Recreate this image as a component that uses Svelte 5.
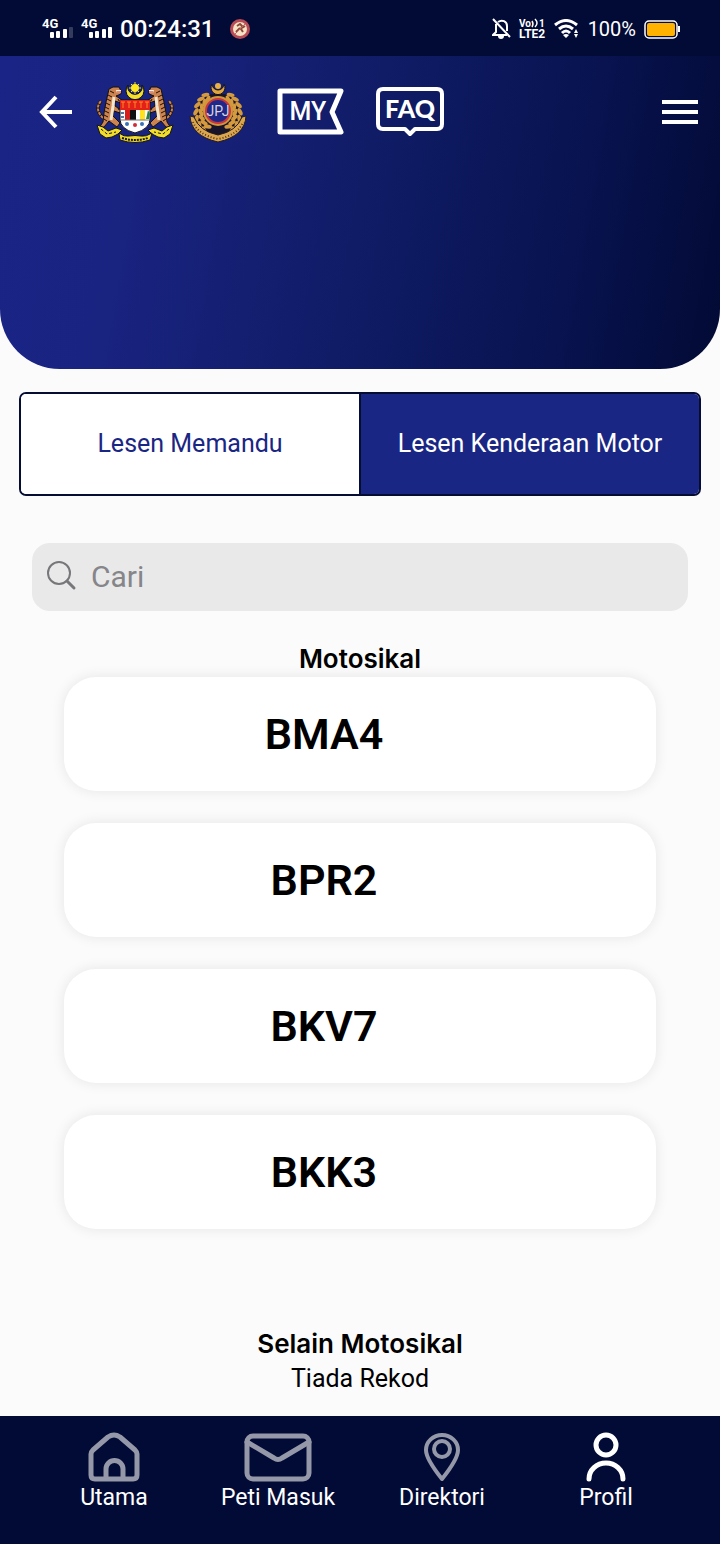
<script>
  let activeTab = "motor";
  let query = "";

  const tabs = [
    { id: "memandu", label: "Lesen Memandu" },
    { id: "motor", label: "Lesen Kenderaan Motor" },
  ];

  const plates = ["BMA4", "BPR2", "BKV7", "BKK3"];

  // leaves of the wreath, as angles round the centre of the crest
  const leaves = [-56, -38, -20, -2, 16, 34, 50];

  $: shown = plates.filter((p) => p.includes(query.trim().toUpperCase()));
</script>

<div class="page">
  <div class="status">
    <svg class="signal" width="32" height="24" viewBox="0 0 32 24" aria-hidden="true">
      <text x="0" y="11">4G</text>
      <rect x="8" y="15" width="4" height="6" rx="1" />
      <rect x="14" y="14" width="4" height="7" rx="1" />
      <rect x="21" y="12" width="4" height="9" rx="1" />
      <rect x="27" y="10" width="4" height="11" rx="1" opacity="0.2" />
    </svg>
    <svg class="signal" width="32" height="24" viewBox="0 0 32 24" aria-hidden="true">
      <text x="0" y="11">4G</text>
      <rect x="8" y="15" width="4" height="6" rx="1" />
      <rect x="14" y="14" width="4" height="7" rx="1" />
      <rect x="21" y="12" width="4" height="9" rx="1" />
      <rect x="27" y="10" width="4" height="11" rx="1" />
    </svg>
    <span class="clock">00:24:31</span>
    <svg class="badge" width="20" height="20" viewBox="0 0 20 20" aria-hidden="true">
      <circle cx="10" cy="10" r="10" fill="#b84b55" />
      <circle cx="10" cy="10" r="7" fill="#f6e3c5" />
      <path d="M7 7l3-2 2 2-1 3 2 3M10 9l-4 4M12 9l3-2" fill="none" stroke="#8b4a3a" stroke-width="2" />
      <path d="M5 15L15 5" stroke="#c8625f" stroke-width="1" />
    </svg>
    <span class="spacer"></span>
    <svg class="bell" width="20" height="22" viewBox="0 0 20 22" aria-hidden="true">
      <path d="M4 6v8l-3 3h14M6 4c4-3 9-.5 9 4v5M1 1l17 18" fill="none" stroke="#fff" stroke-width="2" />
      <path d="M6 18h6a3 3 0 0 1-6 0z" fill="#fff" />
    </svg>
    <svg class="volte" width="28" height="22" viewBox="0 0 28 22" aria-hidden="true">
      <text x="0" y="9" font-size="10">Vo</text>
      <path d="M13 3q2 3 0 6M16 1q4 4 0 8" fill="none" stroke="#fff" stroke-width="1.500" />
      <text x="20" y="9" font-size="10">1</text>
      <text x="0" y="20" font-size="12">LTE2</text>
    </svg>
    <svg class="wifi" width="26" height="20" viewBox="0 0 26 20" aria-hidden="true">
      <path d="M1 6q11-9 22 0M5 10q7-6 14 0M8 14q4-4 8 0" fill="none" stroke="#fff" stroke-width="3" />
      <path d="M9 16q3-2 6 0l-3 3zM22 10l2 4h-4zM22 19l2-4h-4z" fill="#fff" />
    </svg>
    <span class="percent">100%</span>
    <svg width="37" height="19" viewBox="0 0 37 19" aria-hidden="true">
      <rect x="1" y="1" width="32" height="17" rx="4" fill="none" stroke="#fff" stroke-width="1.500" />
      <rect x="3" y="3" width="28" height="13" rx="2" fill="#ffb300" />
      <path d="M35 6v6" stroke="#fff" stroke-width="2" />
    </svg>
  </div>

  <header>
    <button class="back" aria-label="Kembali">
      <svg width="34" height="34" viewBox="0 0 34 34">
        <path d="M33 17H3M17 2L3 17l14 15" fill="none" stroke="#fff" stroke-width="4" />
      </svg>
    </button>

    <svg class="arms" width="78" height="62" viewBox="0 0 78 62" role="img" aria-label="Jata Negara">
      <!-- crescent and star -->
      <path d="M32 3a9 9 0 1 0 14 0a7.300 7.300 0 1 1-14 0z" fill="#f3df2c" stroke="#111" stroke-width="1" />
      <circle cx="39" cy="6" r="4" fill="#ffe91f" />
      <path d="M39 0v12M33 6h12M35 2l8 8M43 2l-8 8" stroke="#ffe91f" stroke-width="1" />
      <!-- tigers, the right one mirrors the left -->
      {#each ["", "translate(78 0) scale(-1 1)"] as side}
        <g transform={side}>
          <path d="M7 36q-9-9-2-17" fill="none" stroke="#111" stroke-width="3" />
          <path d="M7 36q-9-9-2-17" fill="none" stroke="#cf8045" stroke-width="2" stroke-dasharray="3 1" />
          <path
            d="M13 7l4-2 6 0 2 4 0 3-5 2 6 4-1 3-6-2 0 5 6 4-1 3-6-2-1 5 7 7-3 4-8-6-5 6-5 1 4-6 1-9 2-11z"
            fill="#cd8350"
            stroke="#111"
            stroke-width="1"
            stroke-linejoin="round"
          />
          <path
            d="M14 9l4 2M12 13l4 2M11 17l4 2M10 21l4 2M9 25l4 2M9 29l4 2M8 33l4 2M8 37l3 2M22 17l1 2M22 26l1 2"
            stroke="#1a120b"
            stroke-width="1"
          />
          <path d="M18 15l-1 9-1 7-1 7" fill="none" stroke="#f4e5cd" stroke-width="3" />
          <path d="M20 8h5v3h-4z" fill="#f8f1de" />
          <path d="M21 10h4" stroke="#c52421" stroke-width="1" />
          <path d="M1 43l6 2 5 4 8-3 6 2-4 4-6 3-6 1-6-4z" fill="#f2dd2b" stroke="#151515" stroke-width="1" />
          <path d="M5 47l6 5 9-2" fill="none" stroke="#151515" stroke-width="1" stroke-dasharray="3 2" />
        </g>
      {/each}
      <!-- shield -->
      <path d="M24 18h30v19q0 10-15 14q-15-4-15-14z" fill="#fff" stroke="#111" stroke-width="1" />
      <path d="M24 18h30v10H24z" fill="#e32118" />
      <path d="M27 20v6M33 20v6M39 20v6M45 20v6M51 20v6M25 20h4M31 20h4M37 20h4M43 20h4M49 20h4" stroke="#ff8a26" stroke-width="1" />
      <path d="M29 28h5v10h-5z" fill="#d81f1c" />
      <path d="M34 28h6v10h-6z" fill="#111" />
      <path d="M40 28h4v10h-4z" fill="#fff" />
      <path d="M44 28h5v10h-5z" fill="#ffe21d" />
      <path d="M52 28l2 4-1 5h-3l1-4z" fill="#248244" />
      <path d="M25 31h3M25 35h3" stroke="#5379a1" stroke-width="2" />
      <path d="M24 38h30" stroke="#777" stroke-width="1" />
      <circle cx="31" cy="42" r="2" fill="#3a72b5" />
      <circle cx="39" cy="43" r="2" fill="#d32c35" />
      <circle cx="46" cy="42" r="2" fill="#3a72b5" />
      <path d="M23 51q5 4 10 3q6-1 12 0q5 1 11-3l-2 7q-15 5-30 0z" fill="#f2dd2b" stroke="#151515" stroke-width="1" />
      <path d="M26 56q13 4 26 0" fill="none" stroke="#151515" stroke-width="2" stroke-dasharray="2 1" />
    </svg>

    <svg class="crest" width="58" height="62" viewBox="0 0 58 62" role="img" aria-label="JPJ">
      <path d="M5 36l5-17 12-7h14l12 7 5 17-8 14-16 7-16-7z" fill="#18152a" />
      <path d="M23 2a7 7 0 1 0 12 0a6 6 0 1 1-12 0z" fill="#e0a53c" stroke="#17121b" stroke-width="1" />
      <circle cx="29" cy="4" r="3" fill="#e8b142" />
      {#each leaves as angle}
        <g fill="#d49a3d">
          <ellipse cx="7" cy="29" rx="2" ry="4" transform="rotate({angle} 29 31) rotate(30 7 29)" />
          <ellipse cx="12" cy="30" rx="2" ry="4" transform="rotate({angle} 29 31) rotate(-25 12 30)" />
          <ellipse cx="51" cy="29" rx="2" ry="4" transform="rotate({-angle} 29 31) rotate(-30 51 29)" />
          <ellipse cx="46" cy="30" rx="2" ry="4" transform="rotate({-angle} 29 31) rotate(25 46 30)" />
        </g>
      {/each}
      <circle cx="29" cy="29" r="15" fill="#cf963c" />
      <circle cx="29" cy="29" r="12" fill="#20278a" stroke="#c9353c" stroke-width="2" />
      <text x="29" y="34" font-size="14" text-anchor="middle">JPJ</text>
      <path d="M1 34l4 1q5 14 24 18q19-4 24-18l4-1q-1 20-28 26q-27-6-28-26z" fill="#dba64d" stroke="#251b22" stroke-width="1" />
      <path d="M4 40q5 13 25 17q20-4 25-17" fill="none" stroke="#51361d" stroke-width="2" stroke-dasharray="1 2" />
    </svg>

    <button class="flag" aria-label="MY">
      <svg width="68" height="48" viewBox="0 0 68 48">
        <path d="M3 3h61L55 24l9 20H3z" fill="none" stroke="#fff" stroke-width="5" stroke-linejoin="round" />
        <text x="31" y="32" font-size="25" text-anchor="middle">MY</text>
      </svg>
    </button>
    <button class="faq" aria-label="FAQ">
      <svg width="68" height="50" viewBox="0 0 68 50">
        <path
          d="M7 2h54q5 0 5 5v30q0 5-5 5H39l-5 5-5-5H7q-5 0-5-5V7q0-5 5-5z"
          fill="none"
          stroke="#fff"
          stroke-width="4"
          stroke-linejoin="round"
        />
        <text x="34" y="31" font-size="25" text-anchor="middle">FAQ</text>
      </svg>
    </button>
    <span class="spacer"></span>
    <button class="menu" aria-label="Menu">
      <svg width="36" height="26" viewBox="0 0 36 26">
        <path d="M0 3h36M0 13h36M0 23h36" stroke="#fff" stroke-width="4" />
      </svg>
    </button>
  </header>

  <main>
    <div class="tabs">
      {#each tabs as tab}
        <button class:active={activeTab === tab.id} on:click={() => (activeTab = tab.id)}>
          {tab.label}
        </button>
      {/each}
    </div>

    <label class="search">
      <svg width="30" height="32" viewBox="0 0 30 32" aria-hidden="true">
        <circle cx="12" cy="12" r="11" fill="none" stroke="#77777b" stroke-width="2" />
        <path d="M20 20l7 7" stroke="#77777b" stroke-width="3" stroke-linecap="round" />
      </svg>
      <input type="text" placeholder="Cari" aria-label="Cari" bind:value={query} />
    </label>

    <section>
      <h2>Motosikal</h2>
      <div class="cards">
        {#each shown as plate}
          <button class="card">{plate}</button>
        {/each}
      </div>
    </section>

    <section class="others">
      <h2>Selain Motosikal</h2>
      <p>Tiada Rekod</p>
    </section>
  </main>

  <nav>
    <a href="#utama">
      <svg width="52" height="50" viewBox="0 0 52 50" aria-hidden="true">
        <path d="M3 22q0-2 2-4L20 5q6-4 12 0l15 13q2 2 2 4v21q0 4-4 4H7q-4 0-4-4zM18 47V37a8 8 0 0 1 17 0v10" />
      </svg>
      <span>Utama</span>
    </a>
    <a href="#peti">
      <svg width="68" height="50" viewBox="0 0 68 50" aria-hidden="true">
        <rect x="3" y="4" width="62" height="43" rx="6" />
        <path d="M3 10l27 16q4 3 8 0l27-16" />
      </svg>
      <span>Peti Masuk</span>
    </a>
    <a href="#direktori" class="pin">
      <svg width="38" height="50" viewBox="0 0 38 50" aria-hidden="true">
        <path d="M19 47Q3 27 3 18a16 15 0 0 1 32 0q0 9-16 29z" />
        <circle cx="19" cy="17" r="8" />
      </svg>
      <span>Direktori</span>
    </a>
    <a href="#profil" class="current">
      <svg width="40" height="50" viewBox="0 0 40 50" aria-hidden="true">
        <circle cx="20" cy="13" r="10" />
        <path d="M3 47a17 16 0 0 1 34 0" />
      </svg>
      <span>Profil</span>
    </a>
  </nav>
</div>

<style>
  :global(body) {
    background: #fbfbfb;
  }

  .page {
    display: flex;
    flex-direction: column;
    min-height: 100vh;
    font-family: Roboto, "Liberation Sans", sans-serif;
    color: #000;
  }

  button {
    padding: 0;
    border: 0;
    background: none;
    font-family: inherit;
    cursor: pointer;
  }

  svg {
    display: block;
    flex: none;
  }

  svg text {
    fill: #fff;
    font-family: Roboto, sans-serif;
    font-weight: 700;
  }

  .spacer {
    flex: 1;
  }

  .status {
    display: flex;
    align-items: center;
    height: 56px;
    padding: 2px 39px 0 42px;
    box-sizing: border-box;
    background: #020b35;
    color: #fff;
  }

  .signal {
    margin-right: 7px;
    fill: #fff;
  }

  .signal text {
    font-size: 13px;
  }

  .clock {
    margin-right: 15px;
    font-size: 24px;
    font-weight: 500;
    line-height: 28px;
  }

  .bell,
  .volte {
    margin-right: 7px;
  }

  .wifi {
    margin-right: 8px;
  }

  .percent {
    margin-right: 8px;
    font-size: 20px;
    line-height: 24px;
  }

  header {
    display: flex;
    align-items: flex-start;
    height: 287px;
    padding: 26px 22px 0 39px;
    border-radius: 0 0 60px 60px;
    background: linear-gradient(100deg, #1a2486 0%, #192380 20%, #101c66 50%, #081350 78%, #020a34 100%);
  }

  .back {
    margin: 13px 23px 0 0;
  }

  .arms {
    margin-right: 15px;
  }

  .crest {
    margin-right: 30px;
  }

  .crest text {
    fill: #d9d5dc;
    font-weight: 400;
  }

  .flag {
    margin: 6px 31px 0 0;
  }

  .flag text {
    font-weight: 500;
  }

  .faq {
    margin-top: 5px;
  }

  .faq text {
    font-family: Lato, sans-serif;
    font-weight: 900;
  }

  .menu {
    margin-top: 17px;
  }

  main {
    flex: 1;
    padding-top: 23px;
  }

  .tabs {
    display: flex;
    height: 100px;
    margin: 0 19px;
    border: 2px solid #050d33;
    border-radius: 7px;
    overflow: hidden;
  }

  .tabs button {
    flex: 1;
    background: #fff;
    color: #1a2683;
    font-size: 25px;
    line-height: 32px;
  }

  .tabs button + button {
    border-left: 2px solid #050d33;
  }

  .tabs button.active {
    background: #1a2683;
    color: #fff;
  }

  .search {
    display: flex;
    align-items: center;
    gap: 14px;
    height: 68px;
    margin: 47px 32px 30px;
    padding: 0 15px;
    border-radius: 18px;
    background: #e9e9e9;
  }

  .search input {
    flex: 1;
    min-width: 0;
    padding: 0;
    border: 0;
    outline: 0;
    background: none;
    font-family: inherit;
    font-size: 30px;
    line-height: 36px;
    color: #333;
  }

  .search input::placeholder {
    color: #85858a;
    opacity: 1;
  }

  section {
    text-align: center;
  }

  h2 {
    margin: 0;
    font-family: Inter, sans-serif;
    font-size: 26px;
    font-weight: 600;
    line-height: 36px;
  }

  .cards {
    display: flex;
    flex-direction: column;
    gap: 32px;
    margin: 0 64px;
  }

  .card {
    height: 114px;
    padding-right: 72px;
    border-radius: 32px;
    background: #fff;
    box-shadow: 0 0 14px rgba(0, 0, 0, 0.09);
    color: #000;
    font-size: 43px;
    font-weight: 600;
  }

  .others {
    padding: 97px 0 20px;
  }

  p {
    margin: 0;
    font-size: 25px;
    line-height: 34px;
  }

  nav {
    display: flex;
    height: 112px;
    padding: 16px 32px 0;
    background: #020b35;
  }

  nav a {
    flex: 1;
    display: flex;
    flex-direction: column;
    align-items: center;
    color: #fff;
    font-size: 23px;
    line-height: 32px;
    text-decoration: none;
  }

  nav svg {
    fill: none;
    stroke: #9598a8;
    stroke-width: 5;
    stroke-linecap: round;
    stroke-linejoin: round;
  }

  nav .pin svg {
    stroke-width: 4;
  }

  nav .current svg {
    stroke: #fff;
  }
</style>
